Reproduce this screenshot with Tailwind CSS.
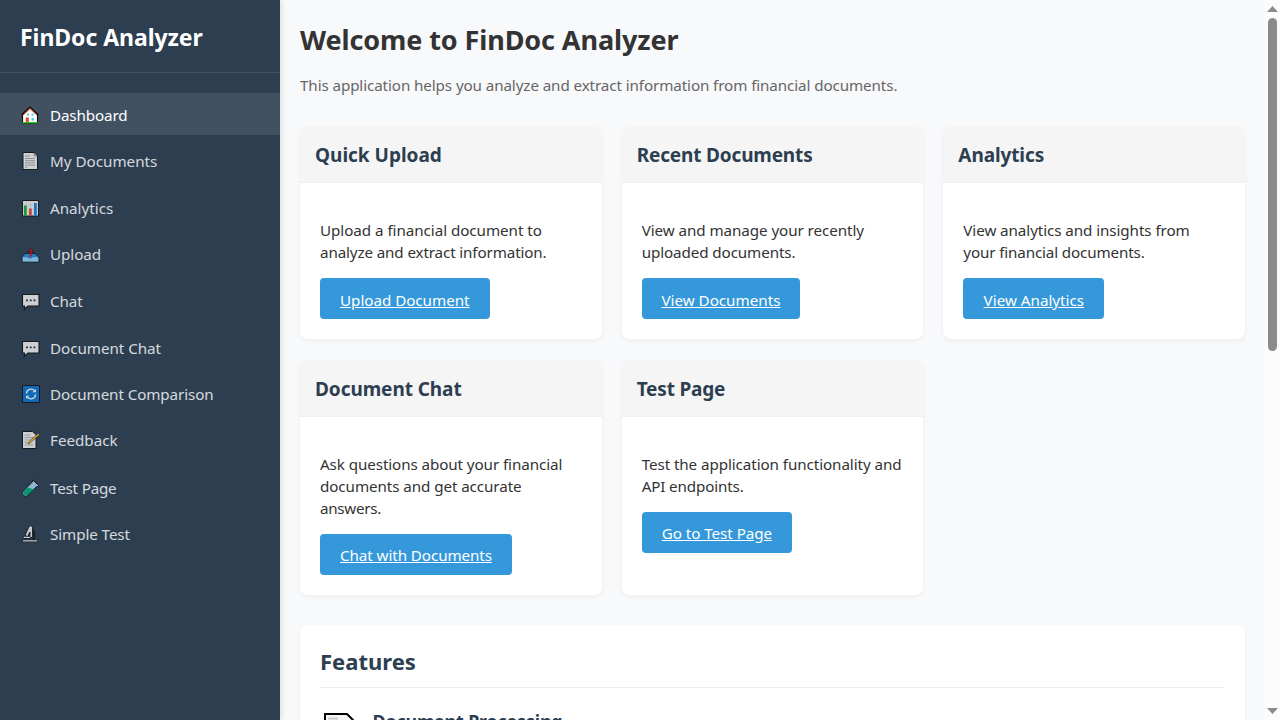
<!DOCTYPE html>
<html lang="en">
<head>
<meta charset="utf-8">
<title>FinDoc Analyzer</title>
<script src="https://cdn.jsdelivr.net/npm/@tailwindcss/browser@4"></script>
</head>
<body class="flex h-screen overflow-hidden bg-[#f8f9fb] font-['Noto_Sans','Open_Sans',sans-serif] text-[15.2px] leading-[22px] text-[#333]">

<aside class="relative z-10 w-[280px] shrink-0 bg-[#2c3e50] text-white shadow-[2px_0_5px_rgba(0,0,0,0.1)]">
  <div class="h-[73px] border-b border-white/10 px-5 pt-[21px]">
    <h2 class="text-[23px] leading-8 font-bold tracking-[-0.05px]">FinDoc Analyzer</h2>
  </div>
  <nav class="mt-5 flex flex-col gap-[5.1px] text-white">
    <a class="flex h-[41.5px] items-center bg-white/10 pt-[2.5px] pl-5">
      <svg class="h-5 w-5" viewBox="0 0 20 20"><path d="M2.500 9.500 10 2.600l7.500 6.900V18.500h-15z" fill="#fff" stroke="#111" stroke-width="1.200"/><path d="M3 9.600 10 3.200l7 6.400" fill="none" stroke="#e8532b" stroke-width="1.500"/><path d="M1.600 10 10 2.100l8.400 7.900" fill="none" stroke="#111" stroke-width="1.300"/><path d="M7 8.500h2v2H7zm4.500 0h2v2h-2zm0 4.500h2.500v2.500h-2.500z" fill="#45d0f8"/><path d="M5.800 12.500h3V17.500h-3z" fill="#e4472b"/><path d="M2 17.200h16v1.300H2z" fill="#13b51c"/></svg>
      <span class="ml-2.5 tracking-[-0.13px]">Dashboard</span>
    </a>
    <a class="flex h-[41.5px] items-center pt-[0.5px] pl-5 opacity-80">
      <svg class="h-5 w-5" viewBox="0 0 20 20"><path d="M3 1.500h11l3.500 3.200V18.500H3z" fill="#f6f6f6" stroke="#111" stroke-width="1"/><path d="M14 2v3h3" fill="#bbb" stroke="#777" stroke-width=".6"/><path d="M5 5h5M5 7.500h10M5 9.700h10M5 11.900h10M5 14.100h10M5 16.300h2" stroke="#a5a5a5" stroke-width="1"/></svg>
      <span class="ml-2.5">My Documents</span>
    </a>
    <a class="flex h-[41.5px] items-center pt-[2.5px] pl-5 opacity-80">
      <svg class="h-5 w-5" viewBox="0 0 20 20"><path d="M2.500 2.500h16v15.500h-16z" fill="#f4f4f4" stroke="#111"/><path d="M6.500 3v14.500M10.500 3v14.500M14.500 3v14.500M3 7h15M3 11h15" stroke="#ccc" stroke-width=".5"/><path d="M4 7.500h2.700V17.500H4z" fill="#18b02a"/><path d="M9 10.500h2.700v7H9z" fill="#e5452f"/><path d="M14 5h2.800v12.500H14z" fill="#1683e0"/></svg>
      <span class="ml-2.5">Analytics</span>
    </a>
    <a class="flex h-[41.5px] items-center pt-[0.5px] pl-5 opacity-80">
      <svg class="h-5 w-5" viewBox="0 0 20 20"><path d="m5 9.500h10l4 3.500v5h-17V13z" fill="#2d8ddc" stroke="#111" stroke-width=".8"/><path d="M2.700 13.200h4.500c.7 1.800 4.900 1.800 5.600 0h5.500v4.300H2.700z" fill="#9bd3f6"/><path d="M10.700 12.800V6.500" stroke="#d80f27" stroke-width="2"/><path d="m7.300 8 3.400-3.700L14.100 8z" fill="#d80f27" stroke="#111" stroke-width=".7"/></svg>
      <span class="ml-2.5 tracking-[-0.07px]">Upload</span>
    </a>
    <a class="flex h-[41.5px] items-center pt-[2.5px] pl-5 opacity-80">
      <svg class="h-5 w-5" viewBox="0 0 20 20"><path d="M2.500 3.500h16.500v11.500H8L4.500 18v-3h-2z" fill="#f4f4f4" stroke="#111" stroke-width="1.100"/><path d="M6 8.500h1.800v1.800H6zm3.800 0h1.800v1.800H9.800zm3.800 0h1.800v1.800h-1.800z" fill="#222"/></svg>
      <span class="ml-2.5 tracking-[-0.1px]">Chat</span>
    </a>
    <a class="flex h-[41.5px] items-center pt-[2.5px] pl-5 opacity-80">
      <svg class="h-5 w-5" viewBox="0 0 20 20"><path d="M2.500 3.500h16.500v11.500H8L4.500 18v-3h-2z" fill="#f4f4f4" stroke="#111" stroke-width="1.100"/><path d="M6 8.500h1.800v1.800H6zm3.800 0h1.800v1.800H9.800zm3.800 0h1.800v1.800h-1.800z" fill="#222"/></svg>
      <span class="ml-2.5 tracking-[-0.04px]">Document Chat</span>
    </a>
    <a class="flex h-[41.5px] items-center pt-[0.5px] pl-5 opacity-80">
      <svg class="h-5 w-5" viewBox="0 0 20 20"><path d="M2.500 1.500h17v17h-17z" fill="#0b75d3" stroke="#111"/><path d="M6.500 9.500a4.500 4.500 0 0 1 8-2.700M15.500 10.500a4.500 4.500 0 0 1-8 2.700" fill="none" stroke="#fff" stroke-width="1.300"/><path d="M15.900 5v3.300h-3.300zM6.100 15v-3.300h3.300z" fill="#fff"/></svg>
      <span class="ml-2.5 tracking-[-0.1px]">Document Comparison</span>
    </a>
    <a class="flex h-[41.5px] items-center pt-[0.5px] pl-5 opacity-80">
      <svg class="h-5 w-5" viewBox="0 0 20 20"><path d="M2.500 1.500h10l3.500 3v14H2.500z" fill="#f5f5f5" stroke="#111"/><path d="M4.500 5h6M4.500 7.500h9M4.500 10h7M4.500 12.500h4M4.500 15h9" stroke="#aaa" stroke-width=".9"/><path d="m8 14 .8-2.200 8.800-8 1.300 1.400-8.800 8z" fill="#f6b52c" stroke="#3a2c10" stroke-width=".5"/><path d="m17 4.400 1-1 1.400 1.500-1 1z" fill="#e87b6c"/></svg>
      <span class="ml-2.5">Feedback</span>
    </a>
    <a class="flex h-[41.5px] items-center pt-[2.5px] pl-5 opacity-80">
      <svg class="h-5 w-5" viewBox="0 0 20 20"><path d="m12.500 1.800 6.300 5.700-1.200 1.300-1-.2-8.800 8.700c-3.200 2.500-6.800-1-4.400-4.200l9-9.200z" fill="#a9d5f4" stroke="#111" stroke-width="1"/><path d="m7.300 9.500 6.600 1.700-6.500 6c-2.700 1.600-5-.6-3.600-3.400z" fill="#00ab7e"/></svg>
      <span class="ml-2.5 tracking-[-0.2px]">Test Page</span>
    </a>
    <a class="flex h-[41.5px] items-center pt-[2.5px] pl-5 opacity-80">
      <svg class="h-5 w-5" viewBox="0 0 20 20"><path d="M11.500 5c3.500 2 4 8 1.500 11.500" fill="none" stroke="#111" stroke-width="1.500"/><path d="m8.600 3.500 1.900-2 2 1.500v10.500h-2.500V8L7.500 12.500 5 11.500z" fill="#eee" stroke="#111" stroke-width=".9"/><path d="M4 13.500h6M2 17h16" stroke="#111" stroke-width="2.400"/><path d="M4 13.400h6M2.800 16.800h14.500" stroke="#eee" stroke-width="1.200"/></svg>
      <span class="ml-2.5 tracking-[-0.09px]">Simple Test</span>
    </a>
  </nav>
</aside>

<main class="min-w-0 flex-1 overflow-hidden px-5">
  <h1 class="mt-5 text-[27px] leading-10 font-bold tracking-[-0.1px]">Welcome to FinDoc Analyzer</h1>
  <p class="mt-[14px] tracking-[-0.1px] text-[#666]">This application helps you analyze and extract information from financial documents.</p>

  <div class="mt-[30px] grid grid-cols-3 gap-x-5 gap-y-[21px]">
    <section class="overflow-hidden rounded-lg bg-white pb-5 shadow-[0_2px_4px_rgba(0,0,0,0.05)]">
      <h3 class="h-[57px] border-b border-[#f0f0f0] bg-[#f5f5f5] px-[15px] pt-4 text-[19px] leading-[26px] font-bold text-[#2c3e50]">Quick Upload</h3>
      <div class="px-5 pt-9">
        <p class="whitespace-nowrap"><span class="tracking-[-0.05px]">Upload a financial document to</span><br><span class="tracking-[-0.13px]">analyze and extract information.</span></p>
        <a class="mt-[14.5px] flex h-[41.5px] w-[169.5px] items-center justify-center rounded bg-[#3498db] pt-[3px] tracking-[-0.03px] text-white underline">Upload Document</a>
      </div>
    </section>
    <section class="overflow-hidden rounded-lg bg-white pb-5 shadow-[0_2px_4px_rgba(0,0,0,0.05)]">
      <h3 class="h-[57px] border-b border-[#f0f0f0] bg-[#f5f5f5] px-[15px] pt-4 text-[19px] leading-[26px] font-bold tracking-[-0.16px] text-[#2c3e50]">Recent Documents</h3>
      <div class="px-5 pt-9">
        <p class="whitespace-nowrap"><span class="tracking-[-0.07px]">View and manage your recently</span><br><span class="tracking-[-0.1px]">uploaded documents.</span></p>
        <a class="mt-[14.5px] flex h-[41.5px] w-[158.5px] items-center justify-center rounded bg-[#3498db] pt-[3px] text-white underline">View Documents</a>
      </div>
    </section>
    <section class="overflow-hidden rounded-lg bg-white pb-5 shadow-[0_2px_4px_rgba(0,0,0,0.05)]">
      <h3 class="h-[57px] border-b border-[#f0f0f0] bg-[#f5f5f5] px-[15px] pt-4 text-[19px] leading-[26px] font-bold tracking-[-0.1px] text-[#2c3e50]">Analytics</h3>
      <div class="px-5 pt-9">
        <p class="whitespace-nowrap"><span class="tracking-[-0.08px]">View analytics and insights from</span><br><span class="tracking-[-0.14px]">your financial documents.</span></p>
        <a class="mt-[14.5px] flex h-[41.5px] w-[141px] items-center justify-center rounded bg-[#3498db] pt-[3px] text-white underline">View Analytics</a>
      </div>
    </section>
    <section class="overflow-hidden rounded-lg bg-white pb-5 shadow-[0_2px_4px_rgba(0,0,0,0.05)]">
      <h3 class="h-[57px] border-b border-[#f0f0f0] bg-[#f5f5f5] px-[15px] pt-4 text-[19px] leading-[26px] font-bold tracking-[-0.07px] text-[#2c3e50]">Document Chat</h3>
      <div class="px-5 pt-9">
        <p class="whitespace-nowrap"><span class="tracking-[-0.09px]">Ask questions about your financial</span><br><span class="tracking-[-0.08px]">documents and get accurate</span><br><span class="tracking-[-0.3px]">answers.</span></p>
        <a class="mt-[14.5px] flex h-[41.5px] w-[192px] items-center justify-center rounded bg-[#3498db] pt-0.5 tracking-[-0.08px] text-white underline">Chat with Documents</a>
      </div>
    </section>
    <section class="overflow-hidden rounded-lg bg-white pb-5 shadow-[0_2px_4px_rgba(0,0,0,0.05)]">
      <h3 class="h-[57px] border-b border-[#f0f0f0] bg-[#f5f5f5] px-[15px] pt-4 text-[19px] leading-[26px] font-bold tracking-[-0.18px] text-[#2c3e50]">Test Page</h3>
      <div class="px-5 pt-9">
        <p class="whitespace-nowrap"><span class="tracking-[-0.08px]">Test the application functionality and</span><br><span class="tracking-[-0.14px]">API endpoints.</span></p>
        <a class="mt-[14.5px] flex h-[41.5px] w-[150.5px] items-center justify-center rounded bg-[#3498db] pt-0.5 tracking-[-0.05px] text-white underline">Go to Test Page</a>
      </div>
    </section>
  </div>

  <section class="mt-[30px] h-[400px] rounded-lg bg-white px-5 pt-5 shadow-[0_2px_4px_rgba(0,0,0,0.05)]">
    <h2 class="h-[43px] border-b border-[#eee] text-[22px] leading-8 font-bold text-[#2c3e50]">Features</h2>
    <div class="mt-5 flex">
      <svg class="h-10 w-10 shrink-0" viewBox="0 0 40 40"><path d="M5 6h22l6 6v26H5z" fill="#f4f4f4" stroke="#000" stroke-width="2"/><path d="M8 10.500h10M8 16h20" stroke="#ccc" stroke-width="2"/></svg>
      <h3 class="mt-px ml-[12.5px] text-[17.8px] leading-6 font-bold tracking-[-0.12px] text-[#2c3e50]">Document Processing</h3>
    </div>
  </section>
</main>

<div class="flex w-[15px] shrink-0 flex-col items-center bg-[#fcfcfc] pt-[6px] pb-[6px]">
  <svg class="h-[6px] w-[11px]" viewBox="0 0 11 6"><path d="M5.500 0 11 6H0z" fill="#8b8b8b"/></svg>
  <div class="mt-[6px] h-[333px] w-[9px] rounded-full bg-[#8b8b8b]"></div>
  <svg class="mt-auto h-[6px] w-[11px]" viewBox="0 0 11 6"><path d="M0 0h11L5.500 6z" fill="#8b8b8b"/></svg>
</div>
</body>
</html>
